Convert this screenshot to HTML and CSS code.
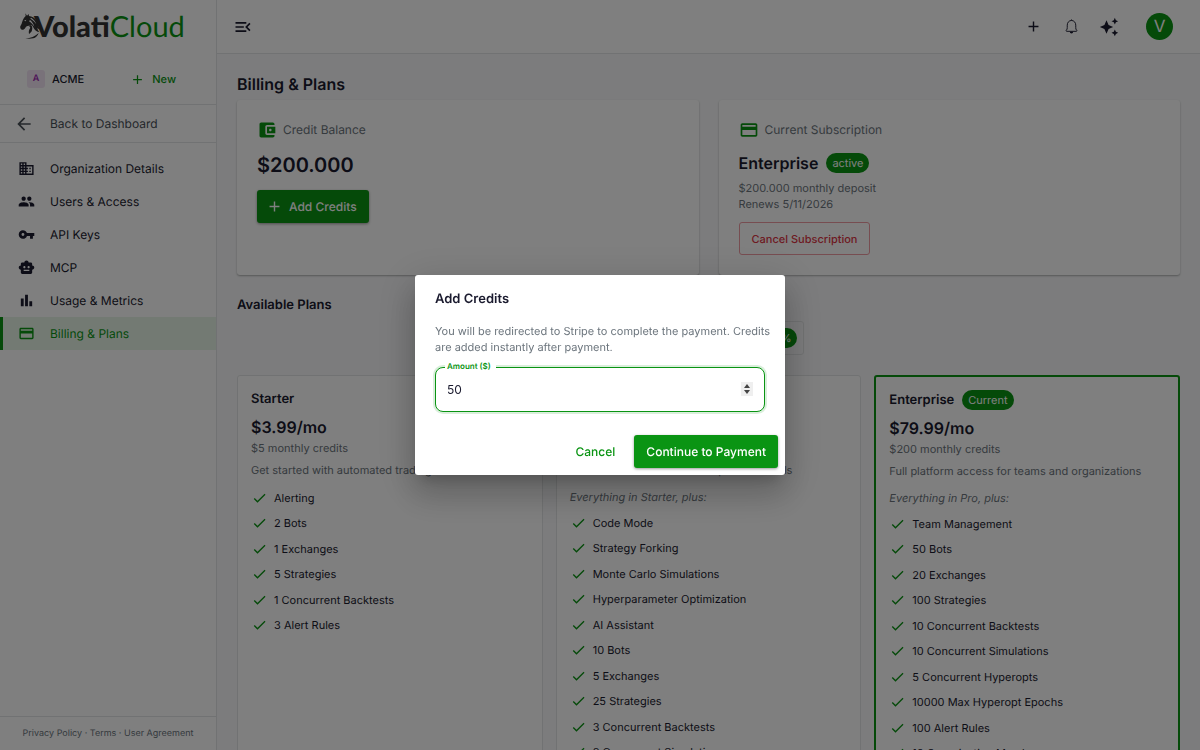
FILE: index.html
```
<!DOCTYPE html>
<html lang="en">
<head>
    <meta charset="UTF-8">
    <meta name="viewport" content="width=device-width, initial-scale=1.0">
    <title>Billing &amp; Plans - VolatiCloud</title>
    <link rel="stylesheet" href="styles.css">
</head>
<body>
    <!-- Shared icons -->
    <svg class="icon-defs" aria-hidden="true">
        <symbol id="icon-add" viewBox="0 0 24 24"><path d="M19 13h-6v6h-2v-6H5v-2h6V5h2v6h6z"/></symbol>
        <symbol id="icon-check" viewBox="0 0 24 24"><path d="M9 16.17 4.83 12l-1.42 1.41L9 19 21 7l-1.41-1.41z"/></symbol>
        <symbol id="icon-card" viewBox="0 0 24 24"><path d="M20 4H4c-1.11 0-1.99.89-1.99 2L2 18c0 1.11.89 2 2 2h16c1.11 0 2-.89 2-2V6c0-1.11-.89-2-2-2zm0 14H4v-6h16v6zm0-10H4V6h16v2z"/></symbol>
    </svg>

    <div class="app">
        <aside class="sidebar">
            <a class="logo" href="#" aria-label="VolatiCloud">
                <svg class="logo-horse" viewBox="0 0 66 84" aria-hidden="true">
                    <path d="M16 1l5 7 5-5 1 6c9 1 16 5 20 11 4 5 6 9 8 12 2 4 4 6 7 8-4 0-6-1-8-3 2 6 5 10 9 13-5-1-9-3-11-6 1 6 3 10 7 14-9-2-15-7-18-13-2-5-4-8-8-10-5 2-9 4-13 5-3 3-5 7-8 9-4 3-8 1-10-2-2-4-2-7 1-11 3-5 4-12 7-18 2-4 5-7 7-9z"/>
                    <path d="M33 36c4 4 5 10 3 16-1 5-5 8-9 11-2-9 1-15 4-19-1-3-3-5-6-6z"/>
                    <path d="M16 76c16 0 29-6 40-16-3 9-9 14-16 16-8 2-17 2-24 0z"/>
                    <path class="logo-cut" d="M12 23l7-3-2 5zM33 14c8 4 13 11 16 20-5-8-11-13-18-17zM30 21c6 5 11 12 13 20-5-7-10-12-16-16z"/>
                </svg>
                <span class="logo-dark">Volati</span><span class="logo-green">Cloud</span>
            </a>

            <div class="org">
                <span class="org-avatar">A</span>
                <span class="org-name">ACME</span>
                <button type="button" class="org-new">
                    <svg class="icon icon-sm"><use href="#icon-add"/></svg>
                    New
                </button>
            </div>

            <a class="nav-item nav-back" href="#">
                <svg class="icon icon-lg" viewBox="0 0 24 24"><path d="M20 11H7.83l5.59-5.59L12 4l-8 8 8 8 1.41-1.41L7.83 13H20z"/></svg>
                Back to Dashboard
            </a>

            <nav class="nav">
                <a class="nav-item" href="#">
                    <svg class="icon" viewBox="0 0 24 24"><path d="M12 7V3H2v18h20V7H12zM6 19H4v-2h2v2zm0-4H4v-2h2v2zm0-4H4V9h2v2zm0-4H4V5h2v2zm4 12H8v-2h2v2zm0-4H8v-2h2v2zm0-4H8V9h2v2zm0-4H8V5h2v2zm10 12h-8v-2h2v-2h-2v-2h2v-2h-2V9h8v10zm-2-8h-2v2h2v-2zm0 4h-2v2h2v-2z"/></svg>
                    Organization Details
                </a>
                <a class="nav-item" href="#">
                    <svg class="icon" viewBox="0 0 24 24"><path d="M16 11c1.66 0 2.99-1.34 2.99-3S17.66 5 16 5c-1.66 0-3 1.34-3 3s1.34 3 3 3zm-8 0c1.66 0 2.99-1.34 2.99-3S9.66 5 8 5C6.34 5 5 6.34 5 8s1.34 3 3 3zm0 2c-2.33 0-7 1.17-7 3.5V19h14v-2.5c0-2.33-4.67-3.5-7-3.5zm8 0c-.29 0-.62.02-.97.05 1.16.84 1.97 1.97 1.97 3.45V19h6v-2.5c0-2.33-4.67-3.5-7-3.5z"/></svg>
                    Users &amp; Access
                </a>
                <a class="nav-item" href="#">
                    <svg class="icon" viewBox="0 0 24 24"><path d="M12.65 10C11.83 7.67 9.61 6 7 6c-3.31 0-6 2.69-6 6s2.69 6 6 6c2.61 0 4.83-1.67 5.65-4H17v4h4v-4h2v-4H12.65zM7 14c-1.1 0-2-.9-2-2s.9-2 2-2 2 .9 2 2-.9 2-2 2z"/></svg>
                    API Keys
                </a>
                <a class="nav-item" href="#">
                    <svg class="icon" viewBox="0 0 24 24"><path d="M20 9V7c0-1.1-.9-2-2-2h-3c0-1.66-1.34-3-3-3S9 3.34 9 5H6c-1.1 0-2 .9-2 2v2c-1.66 0-3 1.34-3 3s1.34 3 3 3v4c0 1.1.9 2 2 2h12c1.1 0 2-.9 2-2v-4c1.66 0 3-1.34 3-3s-1.34-3-3-3zM7.5 11.5c0-.83.67-1.5 1.5-1.5s1.5.67 1.5 1.5S9.83 13 9 13s-1.5-.67-1.5-1.5zM16 17H8v-2h8v2zm-1-4c-.83 0-1.5-.67-1.5-1.5S14.17 10 15 10s1.5.67 1.5 1.5S15.83 13 15 13z"/></svg>
                    MCP
                </a>
                <a class="nav-item" href="#">
                    <svg class="icon" viewBox="0 0 24 24"><path d="M4 9h4v11H4zm12 4h4v7h-4zm-6-9h4v16h-4z"/></svg>
                    Usage &amp; Metrics
                </a>
                <a class="nav-item active" href="#" aria-current="page">
                    <svg class="icon"><use href="#icon-card"/></svg>
                    Billing &amp; Plans
                </a>
            </nav>

            <footer class="sidebar-footer">
                <a href="#">Privacy Policy</a> · <a href="#">Terms</a> · <a href="#">User Agreement</a>
            </footer>
        </aside>

        <div class="content">
            <header class="topbar">
                <button type="button" class="icon-btn" aria-label="Collapse menu">
                    <svg class="icon icon-lg" viewBox="0 0 24 24"><path d="M3 18h13v-2H3v2zm0-5h10v-2H3v2zm0-7v2h13V6H3zm18 9.59L17.42 12 21 8.41 19.59 7l-5 5 5 5L21 15.59z"/></svg>
                </button>
                <div class="topbar-actions">
                    <button type="button" class="icon-btn" aria-label="Create">
                        <svg class="icon"><use href="#icon-add"/></svg>
                    </button>
                    <button type="button" class="icon-btn" aria-label="Notifications">
                        <svg class="icon icon-bell" viewBox="0 0 18 18"><path d="M9 1.6v1M3.9 14.1h10.2c.7 0 .8-.8.3-1.2-.8-.7-.9-1.5-.9-3V7.6C13.5 4.8 11.6 2.6 9 2.6S4.5 4.8 4.5 7.6v2.3c0 1.5-.1 2.3-.9 3-.5.4-.4 1.2.3 1.2z"/><path class="bell-clapper" d="M7.2 14.6h3.6a1.8 1.8 0 0 1-3.6 0z"/></svg>
                    </button>
                    <button type="button" class="icon-btn" aria-label="Assistant">
                        <svg class="icon icon-lg" viewBox="0 0 24 24"><path d="M19 9l1.25-2.75L23 5l-2.75-1.25L19 1l-1.25 2.75L15 5l2.75 1.25L19 9zm-7.5.5L9 4 6.5 9.5 1 12l5.5 2.5L9 20l2.5-5.5L17 12l-5.5-2.5zM19 15l-1.25 2.75L15 19l2.75 1.25L19 23l1.25-2.75L23 19l-2.75-1.25L19 15z"/></svg>
                    </button>
                    <button type="button" class="avatar" aria-label="Account">V</button>
                </div>
            </header>

            <main class="main">
                <h1>Billing &amp; Plans</h1>

                <div class="summary">
                    <section class="card">
                        <h2 class="card-label">
                            <svg class="icon icon-lg" viewBox="0 0 24 24"><path d="M21 18v1c0 1.1-.9 2-2 2H5c-1.11 0-2-.9-2-2V5c0-1.1.89-2 2-2h14c1.1 0 2 .9 2 2v1h-9c-1.11 0-2 .9-2 2v8c0 1.1.89 2 2 2h9zm-9-2h10V8H12v8zm4-2.5c-.83 0-1.5-.67-1.5-1.5s.67-1.5 1.5-1.5 1.5.67 1.5 1.5-.67 1.5-1.5 1.5z"/></svg>
                            Credit Balance
                        </h2>
                        <p class="balance">$200.000</p>
                        <button type="button" class="btn btn-primary">
                            <svg class="icon"><use href="#icon-add"/></svg>
                            Add Credits
                        </button>
                    </section>

                    <section class="card">
                        <h2 class="card-label">
                            <svg class="icon icon-lg"><use href="#icon-card"/></svg>
                            Current Subscription
                        </h2>
                        <p class="sub-name">Enterprise <span class="chip">active</span></p>
                        <p class="muted">$200.000 monthly deposit</p>
                        <p class="muted">Renews 5/11/2026</p>
                        <button type="button" class="btn btn-danger">Cancel Subscription</button>
                    </section>
                </div>

                <h2 class="section-title">Available Plans</h2>

                <div class="interval">
                    <button type="button">Monthly</button>
                    <button type="button">Yearly <span class="chip">-20%</span></button>
                </div>

                <div class="plans">
                    <article class="plan">
                        <h3>Starter</h3>
                        <p class="price">$3.99/mo</p>
                        <p class="muted">$5 monthly credits</p>
                        <p class="muted plan-desc">Get started with automated trading</p>
                        <ul class="features">
                            <li><svg class="icon"><use href="#icon-check"/></svg>Alerting</li>
                            <li><svg class="icon"><use href="#icon-check"/></svg>2 Bots</li>
                            <li><svg class="icon"><use href="#icon-check"/></svg>1 Exchanges</li>
                            <li><svg class="icon"><use href="#icon-check"/></svg>5 Strategies</li>
                            <li><svg class="icon"><use href="#icon-check"/></svg>1 Concurrent Backtests</li>
                            <li><svg class="icon"><use href="#icon-check"/></svg>3 Alert Rules</li>
                        </ul>
                    </article>

                    <article class="plan">
                        <h3>Pro</h3>
                        <p class="price">$29.99/mo</p>
                        <p class="muted">$50 monthly credits</p>
                        <p class="muted plan-desc">For active traders who need powerful tools</p>
                        <p class="muted plan-inherit">Everything in Starter, plus:</p>
                        <ul class="features">
                            <li><svg class="icon"><use href="#icon-check"/></svg>Code Mode</li>
                            <li><svg class="icon"><use href="#icon-check"/></svg>Strategy Forking</li>
                            <li><svg class="icon"><use href="#icon-check"/></svg>Monte Carlo Simulations</li>
                            <li><svg class="icon"><use href="#icon-check"/></svg>Hyperparameter Optimization</li>
                            <li><svg class="icon"><use href="#icon-check"/></svg>AI Assistant</li>
                            <li><svg class="icon"><use href="#icon-check"/></svg>10 Bots</li>
                            <li><svg class="icon"><use href="#icon-check"/></svg>5 Exchanges</li>
                            <li><svg class="icon"><use href="#icon-check"/></svg>25 Strategies</li>
                            <li><svg class="icon"><use href="#icon-check"/></svg>3 Concurrent Backtests</li>
                            <li><svg class="icon"><use href="#icon-check"/></svg>3 Concurrent Simulations</li>
                        </ul>
                    </article>

                    <article class="plan plan-current">
                        <h3>Enterprise <span class="chip">Current</span></h3>
                        <p class="price">$79.99/mo</p>
                        <p class="muted">$200 monthly credits</p>
                        <p class="muted plan-desc">Full platform access for teams and organizations</p>
                        <p class="muted plan-inherit">Everything in Pro, plus:</p>
                        <ul class="features">
                            <li><svg class="icon"><use href="#icon-check"/></svg>Team Management</li>
                            <li><svg class="icon"><use href="#icon-check"/></svg>50 Bots</li>
                            <li><svg class="icon"><use href="#icon-check"/></svg>20 Exchanges</li>
                            <li><svg class="icon"><use href="#icon-check"/></svg>100 Strategies</li>
                            <li><svg class="icon"><use href="#icon-check"/></svg>10 Concurrent Backtests</li>
                            <li><svg class="icon"><use href="#icon-check"/></svg>10 Concurrent Simulations</li>
                            <li><svg class="icon"><use href="#icon-check"/></svg>5 Concurrent Hyperopts</li>
                            <li><svg class="icon"><use href="#icon-check"/></svg>10000 Max Hyperopt Epochs</li>
                            <li><svg class="icon"><use href="#icon-check"/></svg>100 Alert Rules</li>
                            <li><svg class="icon"><use href="#icon-check"/></svg>10 Organization Members</li>
                        </ul>
                    </article>
                </div>
            </main>
        </div>
    </div>

    <!-- Add credits dialog -->
    <div class="backdrop">
        <form class="dialog" role="dialog" aria-modal="true" aria-labelledby="dialogTitle">
            <h2 id="dialogTitle">Add Credits</h2>
            <p class="dialog-text">You will be redirected to Stripe to complete the payment. Credits are added instantly after payment.</p>
            <div class="field">
                <label for="amount">Amount ($)</label>
                <input type="number" id="amount" value="50" min="1">
            </div>
            <div class="dialog-actions">
                <button type="button" class="btn btn-text">Cancel</button>
                <button type="submit" class="btn btn-primary">Continue to Payment</button>
            </div>
        </form>
    </div>
</body>
</html>
```

FILE: styles.css
```
* {
    margin: 0;
    padding: 0;
    box-sizing: border-box;
}

:root {
    --green: #0a9413;
    --text: #1a1a2e;
    --muted: #6c757d;
    --border: #e3e5e6;
}

body {
    font-family: Inter, "Liberation Sans", sans-serif;
    font-size: 12px;
    line-height: 16px;
    color: var(--text);
    background-color: #f8f9fa;
    text-rendering: geometricPrecision;
}

a {
    color: inherit;
    text-decoration: none;
}

button {
    font: inherit;
    color: inherit;
    background: none;
    border: none;
    cursor: pointer;
    text-rendering: inherit;
}

ul {
    list-style: none;
}

.icon-defs {
    display: none;
}

.icon {
    width: 17px;
    height: 17px;
    flex-shrink: 0;
    fill: currentColor;
}

.icon-lg {
    width: 20px;
    height: 20px;
}

.icon-sm {
    width: 15px;
    height: 15px;
}

.app {
    display: flex;
    height: 100vh;
    overflow: hidden;
}

/* Sidebar */
.sidebar {
    display: flex;
    flex-direction: column;
    flex: 0 0 217px;
    background-color: white;
    border-right: 1px solid var(--border);
}

.logo {
    display: flex;
    align-items: center;
    height: 54px;
    padding-left: 20px;
    font-family: Lato, sans-serif;
    font-size: 29px;
    line-height: 54px;
}

.logo-horse {
    width: 22px;
    height: 28px;
    margin-right: -8px;
    fill: #333;
}

.logo-cut {
    fill: white;
}

.logo-dark {
    font-weight: 900;
    color: #333;
}

.logo-green {
    color: var(--green);
}

.org {
    display: flex;
    align-items: center;
    height: 51px;
    padding: 0 40px 0 27px;
    font-size: 11px;
    font-weight: 500;
    border-bottom: 1px solid var(--border);
}

.org-avatar {
    width: 18px;
    height: 18px;
    margin-right: 7px;
    border-radius: 3px;
    background-color: #f3e5f5;
    color: #9c27b0;
    font-size: 9px;
    font-weight: 600;
    line-height: 18px;
    text-align: center;
}

.org-new {
    display: flex;
    align-items: center;
    gap: 7px;
    margin-left: auto;
    color: var(--green);
    font-size: 11px;
}

.nav {
    flex: 1;
    padding-top: 9px;
}

.nav-item {
    display: flex;
    align-items: center;
    gap: 15px;
    height: 33px;
    padding-left: 18px;
}

.nav-back {
    gap: 16px;
    height: 38px;
    padding-left: 14px;
    border-bottom: 1px solid var(--border);
    color: #495057;
}

.nav-item.active {
    padding-left: 15px;
    border-left: 3px solid var(--green);
    background-color: #e6f4e7;
    color: var(--green);
}

.sidebar-footer {
    height: 34px;
    border-top: 1px solid var(--border);
    color: var(--muted);
    font-size: 9px;
    line-height: 33px;
    text-align: center;
}

/* Top bar */
.content {
    flex: 1;
    min-width: 0;
}

.topbar {
    display: flex;
    align-items: center;
    justify-content: space-between;
    height: 54px;
    padding: 0 27px 0 16px;
    background-color: white;
    border-bottom: 1px solid var(--border);
}

.topbar-actions {
    display: flex;
    align-items: center;
    gap: 10px;
}

.icon-btn {
    display: flex;
    align-items: center;
    justify-content: center;
    min-width: 28px;
    height: 28px;
}

.topbar > .icon-btn {
    min-width: 20px;
}

.icon-bell {
    fill: none;
    stroke: currentColor;
}

.bell-clapper {
    fill: currentColor;
    stroke: none;
}

.avatar {
    width: 27px;
    height: 27px;
    margin-left: 13px;
    border-radius: 50%;
    background-color: var(--green);
    color: white;
    font-size: 17px;
}

/* Billing page */
.main {
    padding: 20px;
}

h1 {
    margin-bottom: 6px;
    font-size: 16px;
    font-weight: 600;
    line-height: 20px;
}

.summary {
    display: grid;
    grid-template-columns: 1fr 1fr;
    gap: 20px;
}

.card {
    padding: 20px;
    border-radius: 3px;
    background-color: white;
    box-shadow: 0 1px 2px rgba(0, 0, 0, 0.3);
}

.card-label {
    display: flex;
    align-items: center;
    gap: 6px;
    margin-bottom: 10px;
    color: var(--muted);
    font-size: 12px;
    font-weight: 400;
    line-height: 20px;
}

.card-label .icon {
    color: var(--green);
}

.balance {
    margin-bottom: 10px;
    font-size: 20px;
    font-weight: 600;
    line-height: 30px;
}

.sub-name {
    display: flex;
    align-items: center;
    gap: 8px;
    margin-bottom: 4px;
    font-size: 16px;
    font-weight: 600;
    line-height: 26px;
}

.muted {
    color: var(--muted);
    font-size: 11px;
}

.chip {
    display: inline-block;
    padding: 0 6px;
    border-radius: 10px;
    background-color: var(--green);
    color: white;
    font-size: 11px;
    font-weight: 400;
    line-height: 20px;
}

.btn {
    display: inline-flex;
    align-items: center;
    gap: 6px;
    height: 33px;
    padding: 0 12px;
    border-radius: 3px;
    font-size: 12px;
    font-weight: 500;
}

.btn .icon {
    margin-left: -3px;
}

.btn-primary {
    background-color: var(--green);
    color: white;
    box-shadow: 0 1px 3px rgba(0, 0, 0, 0.4);
}

.btn-danger {
    margin-top: 10px;
    border: 1px solid #ee9aa2;
    color: #dc3545;
    font-size: 11px;
}

.btn-text {
    color: var(--green);
}

.section-title {
    margin: 20px 0 6px;
    font-size: 13px;
    font-weight: 600;
    line-height: 20px;
}

.interval {
    display: flex;
    width: fit-content;
    margin: 0 auto 20px;
    border: 1px solid var(--border);
    border-radius: 3px;
}

.interval button {
    height: 32px;
    padding: 0 6px 0 26px;
}

.plans {
    display: grid;
    grid-template-columns: repeat(3, 1fr);
    gap: 13px;
}

.plan {
    padding: 13px;
    border: 1px solid var(--border);
    border-radius: 3px;
    background-color: white;
}

.plan-current {
    border: 2px solid var(--green);
}

.plan h3 {
    display: flex;
    align-items: center;
    gap: 8px;
    font-size: 13px;
    font-weight: 600;
    line-height: 20px;
}

.price {
    margin-top: 5px;
    font-size: 16px;
    font-weight: 600;
    line-height: 26px;
}

.plan-desc {
    margin-top: 6px;
}

.plan-inherit {
    margin: 11px 0 -2px;
    font-style: italic;
}

.features {
    margin-top: 7px;
}

.features li {
    display: flex;
    align-items: center;
    gap: 6px;
    padding: 5px 0 4px;
    font-size: 11px;
}

.features li:nth-child(even) {
    padding-bottom: 5px;
}

.features .icon {
    height: 16px;
    color: var(--green);
}

/* Dialog */
.backdrop {
    position: fixed;
    inset: 0;
    display: flex;
    align-items: center;
    justify-content: center;
    background-color: rgba(0, 0, 0, 0.5);
}

.dialog {
    width: 370px;
    border-radius: 3px;
    background-color: white;
    box-shadow: 0 9px 13px -6px rgba(0, 0, 0, 0.2), 0 20px 32px 3px rgba(0, 0, 0, 0.14), 0 8px 38px 7px rgba(0, 0, 0, 0.12);
}

.dialog h2 {
    padding: 14px 20px;
    font-size: 13px;
    font-weight: 600;
    line-height: 20px;
}

.dialog-text {
    padding: 0 13px 0 20px;
    color: var(--muted);
    font-size: 11px;
}

.field {
    position: relative;
    margin: 12px 20px 16px;
}

.field label {
    position: absolute;
    top: -7px;
    left: 10px;
    padding: 0 5px 0 2px;
    background-color: white;
    color: var(--green);
    font-size: 8px;
    font-weight: 600;
    line-height: 12px;
}

.field input {
    display: block;
    width: 100%;
    height: 45px;
    padding: 0 11px;
    border: 1px solid var(--green);
    border-radius: 8px;
    outline: none;
    box-shadow: 0 0 0 2px rgba(10, 148, 19, 0.15);
    color: var(--text);
    font: inherit;
}

.field input::-webkit-inner-spin-button {
    appearance: none;
    width: 12px;
    height: 14px;
    opacity: 1;
    background: #efefef url("data:image/svg+xml,%3Csvg xmlns='http://www.w3.org/2000/svg' viewBox='0 0 12 14'%3E%3Cpath d='M6 2l3 4H3zM6 12l3-4H3z' fill='%23444'/%3E%3C/svg%3E") center no-repeat;
}

.dialog-actions {
    display: flex;
    justify-content: flex-end;
    gap: 7px;
    padding: 7px;
}
```
